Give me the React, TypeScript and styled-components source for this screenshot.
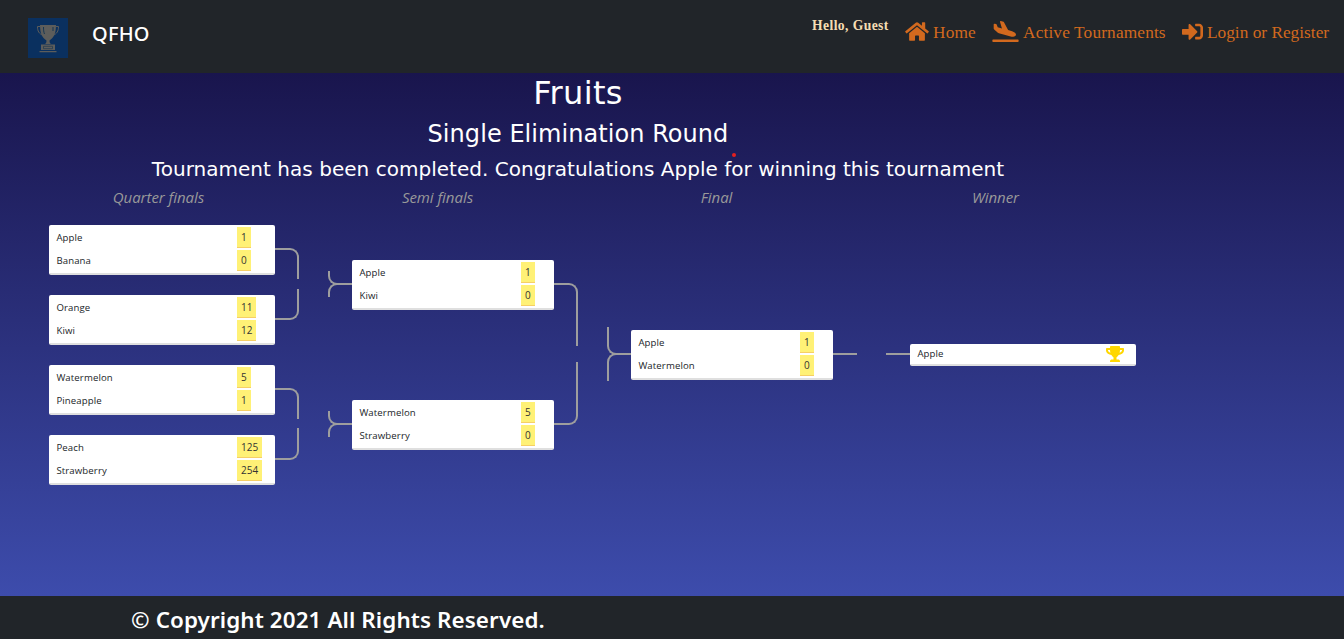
import React from "react";
import styled, { createGlobalStyle } from "styled-components";
import { FaHome, FaPlaneArrival, FaSignInAlt, FaTrophy } from "react-icons/fa";

const GlobalStyle = createGlobalStyle`
  * { box-sizing: border-box; }
  body { margin: 0; overflow: hidden; background: #212529; }
`;

const Page = styled.div`
  display: flex;
  flex-direction: column;
  height: 639px;
  font-family: "Open Sans", "Noto Sans", sans-serif;
`;

const Header = styled.header`
  display: flex;
  justify-content: space-between;
  height: 73px;
  background: #212529;
`;

const Brand = styled.a`
  display: flex;
  gap: 24px;
  padding: 18px 0 0 28px;
`;

const BrandName = styled.span`
  color: #fff;
  font: 500 20px/32px "Noto Sans", sans-serif;
  letter-spacing: 0.2px;
`;

const Nav = styled.nav`
  display: flex;
  padding-right: 15px;
  font-family: "Liberation Serif", serif;
`;

const Greeting = styled.span`
  width: 77px;
  margin: 16px 16px 0 0;
  color: #f5deb3;
  font-size: 13.6px;
  font-weight: 700;
  line-height: 20px;
  letter-spacing: 0.42px;
  white-space: nowrap;
`;

const NavLink = styled.a<{ $width: number; $tracking: number }>`
  display: flex;
  gap: 4px;
  width: ${(p) => p.$width}px;
  height: 24px;
  margin-top: 20px;
  color: #d2691e;
  font-size: 17.3px;
  line-height: 25px;
  letter-spacing: ${(p) => p.$tracking}px;
  white-space: nowrap;
`;

const LinkIcon = styled.span<{ $width: number }>`
  display: flex;
  flex: none;
  width: ${(p) => p.$width}px;
  padding-top: 1px;

  svg { width: 100%; height: 21px; }
`;

const Main = styled.main`
  position: relative;
  flex: 1;
  padding-left: 19px;
  background: linear-gradient(#19154d, #3d4cac);
`;

const Titles = styled.div`
  width: 1118px;
  padding-top: 1px;
  color: #fff;
  font-family: "DejaVu Sans", sans-serif;
  text-align: center;
  white-space: nowrap;
`;

const Title = styled.h1`
  margin: 0;
  font-size: 32px;
  font-weight: 400;
  line-height: 38px;
  letter-spacing: 0.35px;
`;

const Subtitle = styled.h2`
  margin: 8px 0 0;
  font-size: 24px;
  font-weight: 400;
  line-height: 29px;
  letter-spacing: 0.06px;
`;

const Message = styled.h3`
  margin: 8px 0 0;
  font-size: 20px;
  font-weight: 400;
  line-height: 24px;
  letter-spacing: 0.03px;
`;

const RoundNames = styled.div`
  display: grid;
  grid-template-columns: repeat(4, 279px);
  height: 34px;
  padding-top: 5px;
  color: #999;
  font-size: 15px;
  font-style: italic;
  line-height: 22px;
  letter-spacing: -0.04px;
  text-align: center;
`;

const Bracket = styled.div`
  display: flex;
  height: 280px;
`;

const Round = styled.div`
  display: flex;
  flex-direction: column;
  width: 250px;
  margin: 0 -1px 0 30px;
`;

const Slot = styled.div`
  display: flex;
  flex: 1;
`;

const Card = styled.div`
  display: flex;
  flex: 1;
  flex-direction: column;
  align-self: center;
  justify-content: space-between;
  height: 50px;
  padding: 2px 19px 0 7px;
  border-bottom: 2px solid #dfdfdf;
  border-radius: 2px;
  background: #fff;
`;

const WinnerCard = styled(Card)`
  flex-direction: row;
  height: 22px;
  padding: 0 11px 0 7px;
`;

const Prize = styled.span`
  display: flex;
  padding-top: 2px;

  svg { width: 20px; height: 16px; }
`;

const Entry = styled.div<{ $scoreWidth: number }>`
  display: grid;
  grid-template-columns: 1fr ${(p) => p.$scoreWidth}px;
  height: 21px;
  margin-bottom: 2px;
`;

const Name = styled.span`
  padding-left: 0.4px;
  color: #212529;
  font-size: 9.6px;
  font-weight: 500;
  line-height: 21px;
  letter-spacing: 0.12px;
  white-space: nowrap;
`;

const WinnerName = styled(Name)`
  line-height: 20px;
`;

const Score = styled.span`
  justify-self: start;
  height: 21px;
  padding: 0 4px;
  border-bottom: 1px solid #f6cf66;
  background: #fff176;
  color: #333;
  font-size: 10px;
  line-height: 20px;
`;

const line = "2px solid #9e9e9e";

const OutLine = styled.i<{ $top: number; $height: number; $turn?: "down" | "up" }>`
  width: 24px;
  height: ${(p) => p.$height}px;
  margin-top: ${(p) => p.$top}px;
  ${(p) => (p.$turn === "up" ? "border-bottom" : "border-top")}: ${line};
  border-right: ${(p) => (p.$turn ? line : "none")};
  border-top-right-radius: ${(p) => (p.$turn === "down" ? 9 : 0)}px;
  border-bottom-right-radius: ${(p) => (p.$turn === "up" ? 9 : 0)}px;
`;

const InLines = styled.i<{ $top: number }>`
  display: flex;
  flex-direction: column;
  width: 24px;
  margin-top: ${(p) => p.$top}px;
`;

const InHalf = styled.i<{ $height: number; $lower?: boolean }>`
  height: ${(p) => p.$height}px;
  margin-top: ${(p) => (p.$lower ? -2 : 0)}px;
  border-left: ${line};
  ${(p) => (p.$lower ? "border-top" : "border-bottom")}: ${line};
  ${(p) => (p.$lower ? "border-top-left-radius" : "border-bottom-left-radius")}: 9px;
`;

const InLine = styled.i`
  width: 24px;
  height: 2px;
  margin-top: 138px;
  background: #9e9e9e;
`;

const RedDot = styled.i`
  position: absolute;
  top: 80px;
  left: 732px;
  width: 4px;
  height: 4px;
  border-radius: 50%;
  background: #e5201f;
`;

const Footer = styled.footer`
  height: 43px;
  padding: 5px 0 0 131px;
  background: #212529;
  color: #fff;
  font: 600 22.4px/38px "Noto Sans", sans-serif;
  letter-spacing: 0.1px;
  white-space: nowrap;
`;

type Player = [string, number];

interface Match {
  players: [Player, Player];
  out: { top: number; height: number; turn?: "down" | "up" };
  in?: { top: number; half: number };
}

const rounds: Match[][] = [
  [
    { players: [["Apple", 1], ["Banana", 0]], out: { top: 33, height: 31, turn: "down" } },
    { players: [["Orange", 11], ["Kiwi", 12]], out: { top: 4, height: 31, turn: "up" } },
    { players: [["Watermelon", 5], ["Pineapple", 1]], out: { top: 33, height: 31, turn: "down" } },
    { players: [["Peach", 125], ["Strawberry", 254]], out: { top: 3, height: 32, turn: "up" } },
  ],
  [
    { players: [["Apple", 1], ["Kiwi", 0]], in: { top: 56, half: 14 }, out: { top: 68, height: 63, turn: "down" } },
    { players: [["Watermelon", 5], ["Strawberry", 0]], in: { top: 56, half: 14 }, out: { top: 7, height: 63, turn: "up" } },
  ],
  [{ players: [["Apple", 1], ["Watermelon", 0]], in: { top: 112, half: 28 }, out: { top: 138, height: 2 } }],
];

function Logo() {
  return (
    <svg width="40" height="40" viewBox="0 0 40 40">
      <path fill="#0a305f" d="M0 0h40v40H0z" />
      <g fill="#5d5d5b">
        <path d="M12 7h16c0 8-2 12.500-6.500 15.500 0 2 .5 3 1.500 3.500h-6c1-.5 1.500-1.500 1.500-3.500C14 19.500 12 15 12 7z" />
        <path d="M13 26.500h14v5.500H13zM11.500 33h17v1.200h-17z" />
      </g>
      <path d="M12 8.500H9.500c0 5 1.700 7 5 8.700M28 8.500h2.500c0 5-1.700 7-5 8.700" fill="none" stroke="#5d5d5b" />
      <path d="M15.500 9c0 3 .2 5 1 7M25 9v4" fill="none" stroke="#173652" />
      <path d="M15.500 28.300h9v2.400h-9z" fill="none" stroke="#253b50" strokeWidth=".8" />
    </svg>
  );
}

function MatchSlot({ match }: { match: Match }) {
  return (
    <Slot>
      {match.in && (
        <InLines $top={match.in.top}>
          <InHalf $height={match.in.half} />
          <InHalf $height={match.in.half} $lower />
        </InLines>
      )}
      <Card>
        {match.players.map(([name, score]) => (
          <Entry key={name} $scoreWidth={match.in ? 14 : 19}>
            <Name>{name}</Name>
            <Score>{score}</Score>
          </Entry>
        ))}
      </Card>
      <OutLine $top={match.out.top} $height={match.out.height} $turn={match.out.turn} />
    </Slot>
  );
}

export default function App() {
  return (
    <Page>
      <GlobalStyle />
      <Header>
        <Brand>
          <Logo />
          <BrandName>QFHO</BrandName>
        </Brand>
        <Nav>
          <Greeting>Hello, Guest</Greeting>
          <NavLink $width={87} $tracking={0.15}>
            <LinkIcon $width={24}><FaHome /></LinkIcon>
            Home
          </NavLink>
          <NavLink $width={190} $tracking={0.15}>
            <LinkIcon $width={27}><FaPlaneArrival /></LinkIcon>
            Active Tournaments
          </NavLink>
          <NavLink $width={147} $tracking={0.01}>
            <LinkIcon $width={21}><FaSignInAlt /></LinkIcon>
            Login or Register
          </NavLink>
        </Nav>
      </Header>
      <Main>
        <Titles>
          <Title>Fruits</Title>
          <Subtitle>Single Elimination Round</Subtitle>
          <Message>Tournament has been completed. Congratulations Apple for winning this tournament</Message>
        </Titles>
        <RedDot />
        <RoundNames>
          <span>Quarter finals</span>
          <span>Semi finals</span>
          <span>Final</span>
          <span>Winner</span>
        </RoundNames>
        <Bracket>
          {rounds.map((matches, i) => (
            <Round key={i}>
              {matches.map((match, j) => (
                <MatchSlot key={j} match={match} />
              ))}
            </Round>
          ))}
          <Round>
            <Slot>
              <InLine />
              <WinnerCard>
                <WinnerName>Apple</WinnerName>
                <Prize><FaTrophy color="#ffd700" /></Prize>
              </WinnerCard>
            </Slot>
          </Round>
        </Bracket>
      </Main>
      <Footer>© Copyright 2021 All Rights Reserved.</Footer>
    </Page>
  );
}
